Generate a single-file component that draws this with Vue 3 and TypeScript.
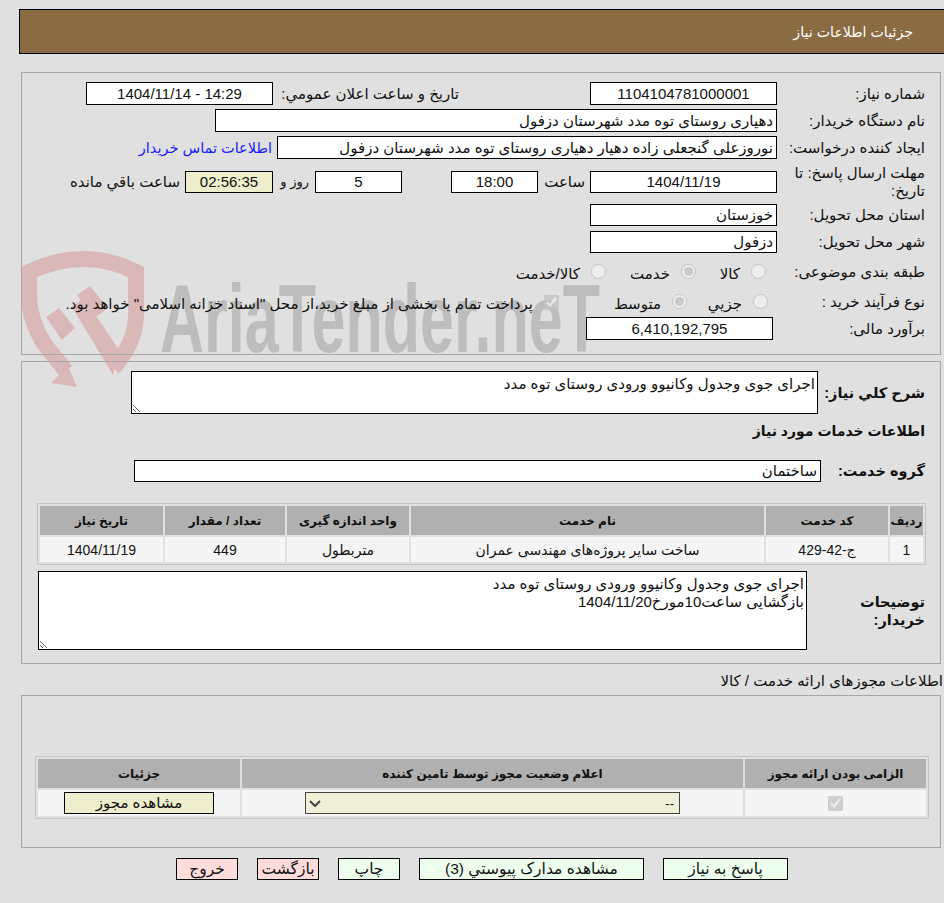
<script setup lang="ts">
interface ActionButton {
  label: string;
  kind: 'ok' | 'back';
  size: string;
}

const services = [
  {
    row: '1',
    code: 'ج-42-429',
    name: 'ساخت سایر پروژه‌های مهندسی عمران',
    unit: 'متربطول',
    count: '449',
    date: '1404/11/19',
  },
];

const summary = 'اجرای جوی وجدول وکانیوو ورودی روستای توه مدد';
const notes = `${summary}\nبازگشایی ساعت10مورخ1404/11/20`;

// listed right to left, the page is rtl
const actions: ActionButton[] = [
  { label: 'پاسخ به نیاز', kind: 'ok', size: 'act--reply' },
  { label: 'مشاهده مدارک پیوستي (3)', kind: 'ok', size: 'act--docs' },
  { label: 'چاپ', kind: 'ok', size: 'act--small' },
  { label: 'بازگشت', kind: 'back', size: 'act--small' },
  { label: 'خروج', kind: 'back', size: 'act--small' },
];
</script>

<template>
  <div class="page">
    <!-- watermark sits behind everything, panels are transparent -->
    <svg class="mark" viewBox="0 0 944 903" aria-hidden="true">
      <g class="mark__shield">
        <path class="mark__line" d="M66 371 L45 345 Q29 320 29 295 L29 272 Q85 246 136 272 L136 318 Q134 345 113 368" />
        <polygon points="72,307 84,298 119,350 113,375" />
        <polygon points="51,383 77,387 68,366" />
        <polygon points="46,317 62,340 75,328 59,308" />
        <polygon points="77,295 90,286 108,308 93,319" />
      </g>
      <text class="mark__text" x="160" y="352" textLength="440" lengthAdjust="spacingAndGlyphs">AriaTender.neT</text>
    </svg>

    <div class="content">
      <header class="title">جزئیات اطلاعات نیاز</header>

      <section class="panel panel--info">
        <div class="row row--a">
          <label class="lbl">شماره نیاز:</label>
          <input class="box box--short box--center" readonly value="1104104781000001" />
          <label class="lbl-date">تاریخ و ساعت اعلان عمومي:</label>
          <input class="box box--short box--center" readonly value="14:29 - 1404/11/14" />
        </div>
        <div class="row row--a">
          <label class="lbl">نام دستگاه خریدار:</label>
          <input class="box box--buyer" readonly value="دهیاری روستای توه مدد شهرستان دزفول" />
        </div>
        <div class="row row--a">
          <label class="lbl">ایجاد کننده درخواست:</label>
          <input class="box box--creator" readonly value="نوروزعلی گنجعلی زاده دهیار دهیاری روستای توه مدد شهرستان دزفول" />
          <a class="contact" href="#">اطلاعات تماس خریدار</a>
        </div>
        <div class="row row--deadline">
          <label class="lbl">مهلت ارسال پاسخ: تا تاریخ:</label>
          <input class="box box--short box--center" readonly value="1404/11/19" />
          <span class="unit unit--hour">ساعت</span>
          <input class="box box--tiny box--center" readonly value="18:00" />
          <input class="box box--tiny box--center box--days" readonly value="5" />
          <span class="unit unit--day">روز و</span>
          <input class="box box--tiny box--center box--timer" readonly value="02:56:35" />
          <span class="unit unit--left">ساعت باقي مانده</span>
        </div>
        <div class="row row--b">
          <label class="lbl">استان محل تحویل:</label>
          <input class="box box--short" readonly value="خوزستان" />
        </div>
        <div class="row row--c">
          <label class="lbl">شهر محل تحویل:</label>
          <input class="box box--short" readonly value="دزفول" />
        </div>
        <div class="row row--d">
          <label class="lbl lbl--raised">طبقه بندی موضوعی:</label>
          <input class="radio radio--first" type="radio" disabled />
          <span class="opt opt--kala">کالا</span>
          <input class="radio" type="radio" disabled checked />
          <span class="opt opt--khedmat">خدمت</span>
          <input class="radio" type="radio" disabled />
          <span class="opt">کالا/خدمت</span>
        </div>
        <div class="row row--e">
          <label class="lbl lbl--raised">نوع فرآیند خرید :</label>
          <input class="radio radio--second" type="radio" disabled />
          <span class="opt opt--jozi">جزيي</span>
          <input class="radio" type="radio" disabled checked />
          <span class="opt opt--motavaset">متوسط</span>
          <input class="check" type="checkbox" disabled checked />
          <span class="opt">پرداخت تمام یا بخشی از مبلغ خرید،از محل "اسناد خزانه اسلامی" خواهد بود.</span>
        </div>
        <div class="row row--a">
          <label class="lbl lbl--budget">برآورد مالی:</label>
          <input class="box box--short box--center" readonly value="6,410,192,795" />
        </div>
      </section>

      <section class="panel panel--need">
        <div class="row row--summary">
          <label class="lbl-strong lbl-strong--summary">شرح كلي نياز:</label>
          <textarea class="area area--summary" readonly :value="summary"></textarea>
        </div>
        <h3 class="heading">اطلاعات خدمات مورد نياز</h3>
        <div class="row row--group">
          <label class="lbl-strong lbl-strong--group">گروه خدمت:</label>
          <input class="box box--group" readonly value="ساختمان" />
        </div>
        <table class="grid grid--services">
          <colgroup>
            <col class="c-row" />
            <col class="c-code" />
            <col class="c-name" />
            <col class="c-unit" />
            <col class="c-count" />
            <col class="c-date" />
          </colgroup>
          <thead>
            <tr>
              <th>ردیف</th>
              <th>کد خدمت</th>
              <th>نام خدمت</th>
              <th>واحد اندازه گیری</th>
              <th>تعداد / مقدار</th>
              <th>تاریخ نیاز</th>
            </tr>
          </thead>
          <tbody>
            <tr v-for="item in services" :key="item.code">
              <td>{{ item.row }}</td>
              <td>{{ item.code }}</td>
              <td>{{ item.name }}</td>
              <td>{{ item.unit }}</td>
              <td>{{ item.count }}</td>
              <td>{{ item.date }}</td>
            </tr>
          </tbody>
        </table>
        <div class="row row--notes">
          <label class="lbl-strong lbl-strong--notes">توضیحات خریدار:</label>
          <textarea class="area area--notes" readonly :value="notes"></textarea>
        </div>
      </section>

      <p class="permits-title">اطلاعات مجوزهای ارائه خدمت / کالا</p>

      <section class="panel panel--permits">
        <table class="grid grid--permits">
          <colgroup>
            <col class="c-required" />
            <col class="c-status" />
            <col class="c-details" />
          </colgroup>
          <thead>
            <tr>
              <th>الزامی بودن ارائه مجوز</th>
              <th>اعلام وضعیت مجوز توسط تامین کننده</th>
              <th>جزئیات</th>
            </tr>
          </thead>
          <tbody>
            <tr>
              <td><input class="check check--cell" type="checkbox" disabled checked /></td>
              <td>
                <div class="status-wrap">
                  <select class="status">
                    <option>--</option>
                  </select>
                  <svg class="status-arrow" viewBox="0 0 12 7" aria-hidden="true">
                    <path d="M1 1 L6 6 L11 1" />
                  </svg>
                </div>
              </td>
              <td><button class="view" type="button">مشاهده مجوز</button></td>
            </tr>
          </tbody>
        </table>
      </section>

      <div class="actions">
        <button
          v-for="action in actions"
          :key="action.label"
          type="button"
          class="act"
          :class="[`act--${action.kind}`, action.size]"
        >
          {{ action.label }}
        </button>
      </div>
    </div>
  </div>
</template>

<style scoped>
.page {
  position: relative;
  width: 944px;
  height: 903px;
  overflow: hidden;
  background: #e0e0e0;
  color: #111;
  direction: rtl;
  font-family: 'Liberation Sans', 'DejaVu Sans', sans-serif;
  font-size: 15px;
}

.mark {
  position: absolute;
  top: 0;
  left: 0;
  width: 944px;
  height: 903px;
  direction: ltr;
}

.mark__shield {
  fill: #dbb8b8;
}

.mark__line {
  fill: none;
  stroke: #dbb8b8;
  stroke-width: 16;
}

.mark__text {
  fill: #bdbdbd;
  font-family: 'Liberation Sans', sans-serif;
  font-size: 96px;
  font-weight: 700;
}

.content {
  position: relative;
  padding-top: 9px;
}

.title {
  box-sizing: border-box;
  height: 45px;
  margin-left: 19px;
  padding: 13px 31px 0 0;
  border: 1px solid #000;
  border-right: 0;
  background: #8b6b42;
  color: #fff;
  font-size: 14.2px;
  line-height: 18px;
}

.panel {
  box-sizing: border-box;
  margin: 0 3px 0 21px;
  border: 1px solid #a6a6a6;
}

.panel--info {
  height: 283px;
  margin-top: 18px;
  padding-top: 9px;
}

.panel--need {
  height: 303px;
  margin-top: 6px;
  padding-top: 9px;
}

.panel--permits {
  height: 153px;
  padding-top: 60px;
}

.row {
  display: flex;
  align-items: center;
  padding-right: 15px;
}

.row--a {
  height: 23px;
  margin-bottom: 4px;
}

.row--deadline {
  height: 37px;
  margin-bottom: 4px;
}

.row--b {
  height: 22px;
  margin-bottom: 5px;
}

.row--c {
  height: 22px;
  margin-bottom: 10px;
}

.row--d {
  height: 22px;
  margin-bottom: 8px;
}

.row--e {
  height: 22px;
  margin-bottom: 2px;
}

.lbl {
  flex: none;
  width: 148px;
  line-height: 18px;
}

.lbl--raised {
  margin-bottom: 4px;
}

.lbl--budget {
  width: 152px;
}

.lbl-date {
  flex: none;
  width: 186px;
  margin-right: 131px;
  white-space: nowrap;
}

.box {
  flex: none;
  box-sizing: border-box;
  height: 100%;
  padding: 0 3px;
  border: 1px solid #000;
  border-radius: 0;
  outline: none;
  background: #fff;
  color: #111;
  font: inherit;
  direction: rtl;
}

.box--center {
  text-align: center;
}

.box--short {
  width: 187px;
}

.box--buyer {
  width: 562px;
}

.box--creator {
  width: 500px;
}

.box--group {
  width: 687px;
  height: 22px;
}

.box--tiny {
  width: 87px;
  height: 22px;
}

.row--deadline .box--short {
  height: 22px;
}

.box--days {
  margin-right: 49px;
}

.box--timer {
  width: 88px;
  background: #eeeecc;
}

.contact {
  margin-right: 5px;
  color: #1a1aff;
  font-size: 14.5px;
  text-decoration: none;
  white-space: nowrap;
}

.unit {
  flex: none;
  white-space: nowrap;
}

.unit--hour {
  width: 42px;
  margin: 0 5px;
}

.unit--day {
  width: 27px;
  margin: 0 6px 0 9px;
  font-size: 13px;
}

.unit--left {
  margin-right: 5px;
}

.radio {
  flex: none;
  width: 15px;
  height: 15px;
  margin: 0 0 5px;
}

.radio--first {
  margin-right: 11px;
}

.radio--second {
  margin-right: 9px;
}

.opt {
  flex: none;
  margin-right: 11px;
  white-space: nowrap;
}

.opt--kala {
  width: 20px;
  margin-left: 24px;
}

.opt--khedmat {
  width: 40px;
  margin-left: 24px;
}

.opt--jozi {
  width: 35px;
  margin-left: 20px;
}

.opt--motavaset {
  width: 45px;
  margin-left: 57px;
}

.check {
  flex: none;
  width: 15px;
  height: 15px;
  margin: 0 0 4px;
}

.check--cell {
  margin: 0;
  vertical-align: middle;
}

.row--summary {
  height: 43px;
}

.lbl-strong {
  flex: none;
  font-size: 14.5px;
  font-weight: 700;
  line-height: 18px;
}

.lbl-strong--summary {
  width: 107px;
}

.lbl-strong--group {
  width: 104px;
}

.lbl-strong--notes {
  width: 118px;
}

.heading {
  height: 18px;
  margin: 8px 15px 20px 0;
  font-size: 14px;
  font-weight: 700;
  line-height: 18px;
}

.row--group {
  height: 22px;
  margin-bottom: 21px;
}

.area {
  flex: none;
  box-sizing: border-box;
  padding: 3px 2px;
  border: 1px solid #000;
  border-radius: 0;
  outline: none;
  background: #fff;
  color: #111;
  font: inherit;
  line-height: 18px;
}

.area--summary {
  width: 687px;
  height: 43px;
}

.area--notes {
  width: 769px;
  height: 79px;
}

.row--notes {
  margin-top: 6px;
}

.grid {
  border: 1px solid #c4c4c4;
  border-collapse: separate;
  border-spacing: 2px;
  table-layout: fixed;
}

.grid--services {
  width: 888px;
  margin-right: 14px;
}

.grid--permits {
  width: 894px;
  margin-right: 11px;
}

.grid th {
  height: 29px;
  padding: 0;
  background: #b0b0b0;
  font-size: 12px;
  font-weight: 700;
}

.grid td {
  height: 25px;
  padding: 0;
  background: #f5f5f5;
  font-size: 14px;
  text-align: center;
}

.grid--permits td {
  height: 26px;
}

.c-row {
  width: 33px;
}

.c-code {
  width: 122px;
}

.c-name {
  width: 353px;
}

.c-unit {
  width: 122px;
}

.c-count {
  width: 120px;
}

.c-date {
  width: 123px;
}

.c-required {
  width: 181px;
}

.c-status {
  width: 501px;
}

.c-details {
  width: 202px;
}

.status-wrap {
  position: relative;
  width: 375px;
  margin: 0 auto;
}

.status {
  display: block;
  box-sizing: border-box;
  width: 375px;
  height: 22px;
  padding: 0 5px;
  border: 1px solid #444;
  border-radius: 0;
  outline: none;
  appearance: none;
  background: #f0f0d8;
  color: #111;
  font: inherit;
  font-size: 13px;
}

.status-arrow {
  position: absolute;
  top: 8px;
  left: 4px;
  width: 12px;
  height: 7px;
  pointer-events: none;
}

.status-arrow path {
  fill: none;
  stroke: #444;
  stroke-width: 2;
}

.view {
  display: block;
  box-sizing: border-box;
  width: 150px;
  height: 22px;
  margin: 0 auto;
  padding: 0;
  border: 1px solid #000;
  background: #eeeecc;
  color: #111;
  font: inherit;
  font-size: 15px;
}

.permits-title {
  height: 18px;
  margin: 8px 1px 5px 0;
  line-height: 18px;
}

.actions {
  display: flex;
  justify-content: center;
  gap: 19px;
  margin: 10px 1px 0 21px;
}

.act {
  box-sizing: border-box;
  height: 22px;
  padding: 0;
  border: 1px solid #000;
  color: #111;
  font: inherit;
  font-size: 15.5px;
}

.act--ok {
  background: #eeffee;
}

.act--back {
  background: #ffdcdc;
}

.act--reply {
  width: 125px;
}

.act--docs {
  width: 225px;
}

.act--small {
  width: 62px;
}
</style>

<style>
html,
body {
  margin: 0;
  background: #e0e0e0;
}
</style>
